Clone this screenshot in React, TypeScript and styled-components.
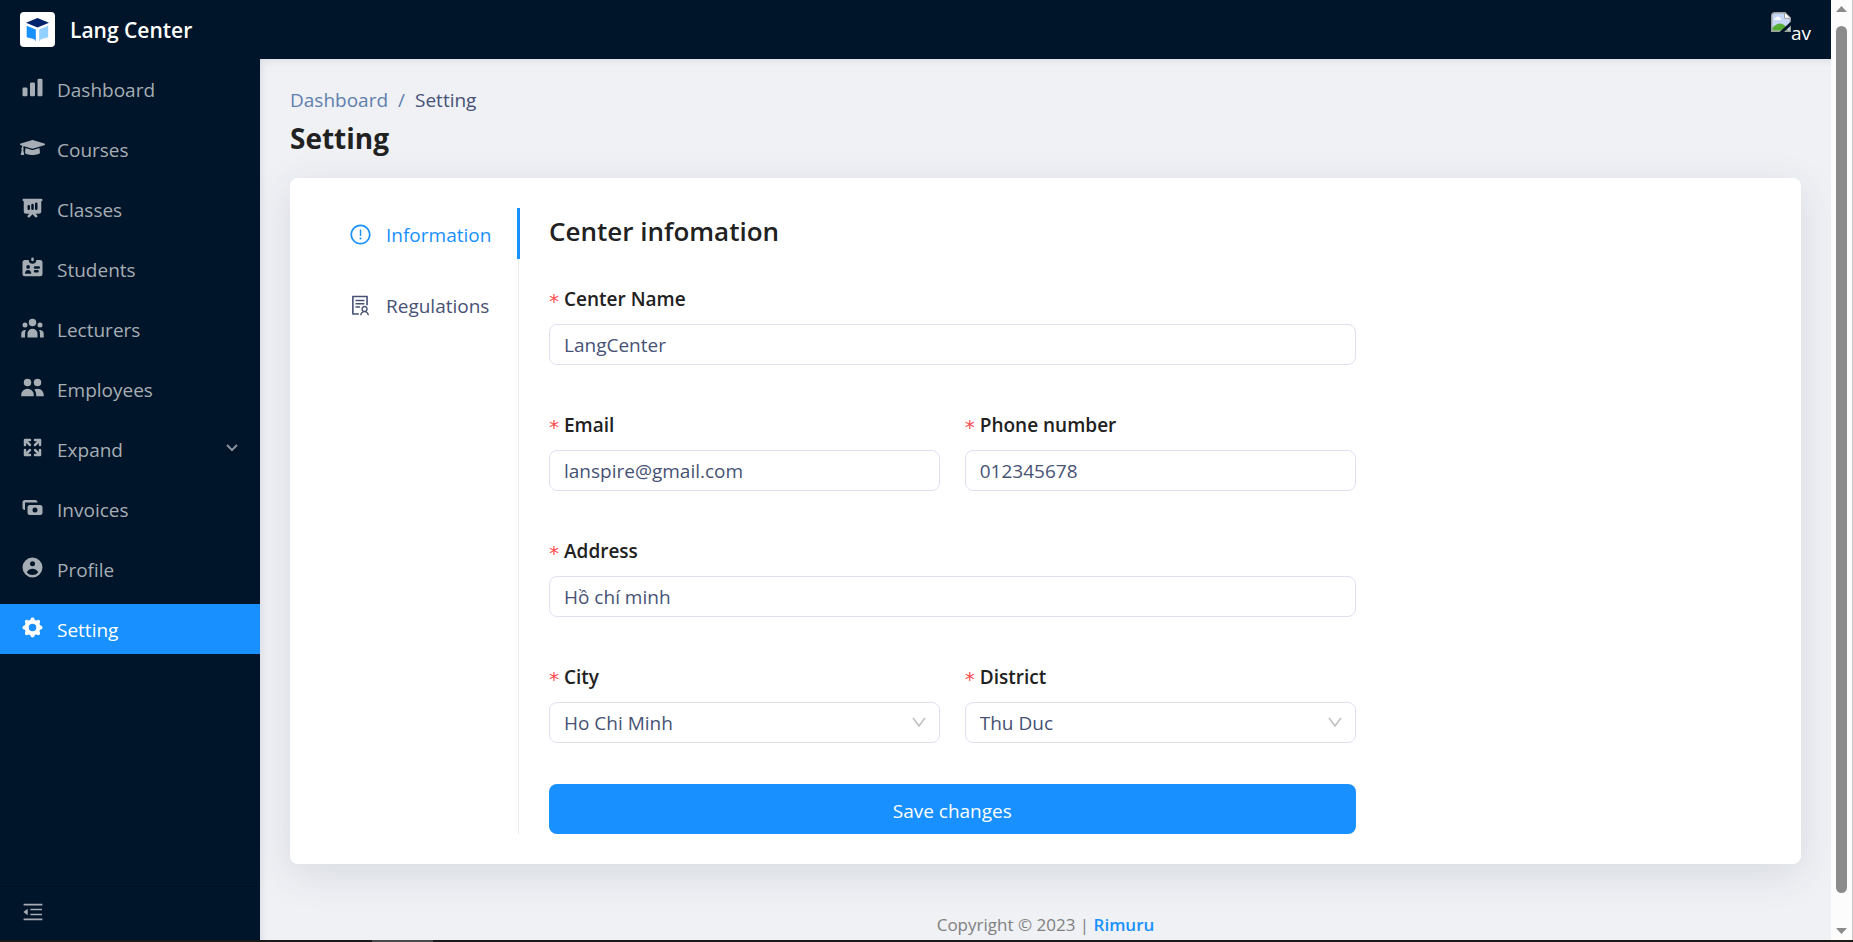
import React from 'react';
import styled, { createGlobalStyle, css } from 'styled-components';
import type { IconType } from 'react-icons';
import {
  HiArrowsExpand,
  HiCash,
  HiChartBar,
  HiCog,
  HiIdentification,
  HiPresentationChartBar,
  HiUserCircle,
  HiUserGroup,
  HiUsers,
} from 'react-icons/hi';
import { FaGraduationCap } from 'react-icons/fa';
import { AiOutlineExclamationCircle, AiOutlineMenuFold, AiOutlineSolution } from 'react-icons/ai';

const color = {
  navy: '#001529',
  blue: '#1890ff',
  page: '#eff1f5',
  heading: '#212121',
  text: '#475275',
  muted: '#5f7fae',
  menu: '#a6adb4',
  line: '#e0e0f3',
  required: '#ff4d4f',
};

const GlobalStyle = createGlobalStyle`
  *, *::before, *::after { box-sizing: border-box; }
  body {
    margin: 0;
    background: ${color.page};
    color: ${color.text};
    font-family: 'Open Sans', 'Noto Sans', sans-serif;
    font-size: 19px;
    line-height: 30px;
  }
  button, input, select { font: inherit; color: inherit; }
  h1, h2, ul, ol { margin: 0; padding: 0; }
  ul, ol { list-style: none; }
  a { text-decoration: none; }
  svg { flex-shrink: 0; }
`;

const Shell = styled.div`
  display: flex;
  flex-direction: column;
  height: 100vh;
`;

const Viewport = styled.div`
  display: flex;
  flex: 1;
  min-height: 0;
`;

const Page = styled.div`
  display: flex;
  flex-direction: column;
  flex: 1;
  min-width: 0;
`;

const Header = styled.header`
  display: flex;
  align-items: center;
  justify-content: space-between;
  flex: none;
  height: 59px;
  padding: 0 20px;
  background: ${color.navy};
  color: #fff;
`;

const Brand = styled.a`
  display: flex;
  align-items: center;
  gap: 15px;
  color: #fff;
  font-size: 21px;
  font-weight: 600;
`;

const Avatar = styled.div`
  display: flex;
  align-items: flex-end;
  height: 35px;
  padding-bottom: 2px;
  line-height: 24px;
  svg { align-self: flex-start; }
`;

const Body = styled.div`
  display: flex;
  flex: 1;
  min-height: 0;
`;

const Sidebar = styled.aside`
  display: flex;
  flex-direction: column;
  justify-content: space-between;
  flex: none;
  width: 260px;
  background: ${color.navy};
`;

const Menu = styled.ul`
  display: flex;
  flex-direction: column;
  gap: 10px;
  padding-top: 5px;
`;

const MenuLink = styled.a<{ $active?: boolean }>`
  display: flex;
  align-items: center;
  height: 50px;
  padding: 2px 20px 0;
  color: ${(p) => (p.$active ? '#fff' : color.menu)};
  background: ${(p) => (p.$active ? color.blue : 'transparent')};
  > svg:first-child {
    margin: 0 12px 5px 0;
  }
  > svg:last-child {
    margin: 0 2px 5px auto;
  }
`;

const CollapseButton = styled.button`
  display: flex;
  align-items: center;
  height: 54px;
  padding: 0 21px 4px;
  border: 0;
  border-top: 1px solid #001020;
  background: transparent;
  color: ${color.menu};
`;

const Main = styled.main`
  flex: 1;
  min-width: 0;
  overflow: hidden;
  padding: 25px 30px 0;
  box-shadow: inset 6px 6px 10px -6px rgba(0, 21, 41, 0.12);
`;

const Crumbs = styled.ol`
  display: flex;
  gap: 10px;
  line-height: 32px;
  color: ${color.muted};
  a { color: ${color.muted}; }
`;

const Current = styled.span`
  color: ${color.text};
`;

const Title = styled.h1`
  color: ${color.heading};
  font-size: 28px;
  font-weight: 700;
  line-height: 44px;
`;

const Card = styled.section`
  display: flex;
  gap: 29px;
  margin-top: 18px;
  padding: 30px;
  border-radius: 8px;
  background: #fff;
  box-shadow: 0 10px 40px rgba(50, 60, 70, 0.12);
`;

const TabList = styled.div`
  display: flex;
  flex-direction: column;
  gap: 20px;
  flex: none;
  width: 200px;
  background: linear-gradient(#ebebf0, #ebebf0) 198px 0 / 1px 100% no-repeat;
`;

const Tab = styled.button<{ $active?: boolean }>`
  display: flex;
  align-items: center;
  gap: 14px;
  height: 51px;
  padding: 2px 0 0 29px;
  border: 0;
  border-right: 3px solid ${(p) => (p.$active ? color.blue : 'transparent')};
  background: transparent;
  color: ${(p) => (p.$active ? color.blue : color.text)};
  white-space: nowrap;
`;

const Pane = styled.div`
  flex: 1;
  min-width: 0;
`;

const PaneTitle = styled.h2`
  margin-bottom: 30px;
  color: ${color.heading};
  font-size: 26px;
  font-weight: 600;
  line-height: 46px;
`;

const Form = styled.form`
  display: flex;
  flex-direction: column;
  gap: 41px;
  width: 66%;
`;

const FieldGrid = styled.div`
  display: grid;
  grid-template-columns: 1fr 1fr;
  gap: 45px 25px;
`;

const Field = styled.div<{ $wide?: boolean }>`
  display: flex;
  flex-direction: column;
  gap: 10px;
  min-width: 0;
  ${(p) => p.$wide && 'grid-column: 1 / -1;'}
`;

const Label = styled.label`
  display: flex;
  gap: 5px;
  color: ${color.heading};
  font-weight: 600;
  line-height: 30px;
  &::before {
    content: '*';
    display: flex;
    justify-content: center;
    width: 10px;
    height: 30px;
    color: ${color.required};
    font-family: 'DejaVu Sans Mono', monospace;
    font-size: 20px;
    font-weight: 400;
    line-height: 34px;
  }
`;

const control = css`
  width: 100%;
  height: 41px;
  padding: 0 14px;
  border: 1px solid ${color.line};
  border-radius: 8px;
  outline: 0;
  background: #fff;
`;

const TextInput = styled.input`
  ${control}
`;

const SelectBox = styled.div`
  display: grid;
  align-items: center;
  > * { grid-area: 1 / 1; }
  svg { justify-self: end; margin-right: 14px; pointer-events: none; }
`;

const Select = styled.select`
  ${control}
  appearance: none;
`;

const SaveButton = styled.button`
  height: 50px;
  padding-top: 4px;
  border: 0;
  border-radius: 8px;
  background: ${color.blue};
  color: #fff;
`;

const Footer = styled.footer`
  padding-top: 46px;
  color: #808080;
  font-size: 17px;
  text-align: center;
  a { color: ${color.blue}; font-weight: 600; }
`;

const ScrollTrack = styled.div`
  display: flex;
  flex-direction: column;
  align-items: center;
  flex: none;
  width: 22px;
  padding: 6px 0;
  border-right: 1px solid #c8c8c8;
  background: #fcfcfc;
`;

const ScrollThumb = styled.div`
  flex: 1;
  width: 11px;
  margin: 14px 0 35px;
  border-radius: 6px;
  background: #8b8b8b;
`;

const BottomEdge = styled.div`
  flex: none;
  height: 2px;
  background: linear-gradient(#4a4a4a, #4a4a4a) 372px 0 / 61px 2px no-repeat #1c1a19;
`;

const Logo = () => (
  <svg width="35" height="35" viewBox="0 0 35 35" aria-hidden="true">
    <rect width="35" height="35" rx="4" fill="#fff" />
    <path d="M6 10.7 17.5 6 29 10.7 17.5 15.4Z" fill="#00246b" />
    <path d="M6.7 13.8 15.8 17.4V29.3Q14.5 26.8 12 26.6Q9.5 26.3 6.7 25.3Z" fill="#1890ff" />
    <path d="M28.2 13.8 19.2 17.4V29.3Q20.3 27 23 26.6Q25.5 26.3 28.2 25.3Z" fill="#91d0ff" />
  </svg>
);

const BrokenImage = () => (
  <svg width="20" height="20" viewBox="0 0 20 20" aria-hidden="true">
    <path d="M4 .7H14L19.3 6V19.3H.7V4Q.7.7 4 .7Z" fill="#c6d8f5" stroke="#a0a0a0" strokeWidth="1.4" />
    <path d="M3 8Q3 5.5 5 5.5Q6.5 3.5 8 5.3Q10 5.3 10 8Z" fill="#fff" />
    <path d="M1.4 18.6V16Q5 11.5 9 11.5Q14 11.5 17 18.6Z" fill="#56ae35" />
    <path d="M8.5 20 20 9.5V13.5L13 20Z" fill="#001529" />
    <path d="M13.5.7V6.3H19.3" fill="#fff" stroke="#a0a0a0" />
  </svg>
);

const MenuChevron = () => (
  <svg width="12" height="12" viewBox="0 0 12 12" fill="none" aria-hidden="true">
    <path d="m1 3 5 5 5-5" stroke="#87919b" strokeWidth="2" />
  </svg>
);

const SelectChevron = () => (
  <svg width="14" height="14" viewBox="0 0 14 14" fill="none" aria-hidden="true">
    <path d="m1 2 6 8 6-8" stroke="#bfbfbf" strokeWidth="1.5" />
  </svg>
);

const ScrollArrow = ({ down }: { down?: boolean }) => (
  <svg width="11" height="6" viewBox="0 0 11 6" aria-hidden="true">
    <path d={down ? 'M0 0H11L5.5 6Z' : 'M0 6H11L5.5 0Z'} fill="#8b8b8b" />
  </svg>
);

const menuItems: { label: string; icon: IconType; active?: boolean; expandable?: boolean }[] = [
  { label: 'Dashboard', icon: HiChartBar },
  { label: 'Courses', icon: FaGraduationCap },
  { label: 'Classes', icon: HiPresentationChartBar },
  { label: 'Students', icon: HiIdentification },
  { label: 'Lecturers', icon: HiUserGroup },
  { label: 'Employees', icon: HiUsers },
  { label: 'Expand', icon: HiArrowsExpand, expandable: true },
  { label: 'Invoices', icon: HiCash },
  { label: 'Profile', icon: HiUserCircle },
  { label: 'Setting', icon: HiCog, active: true },
];

function InputField({ id, label, value, type = 'text', wide }: {
  id: string; label: string; value: string; type?: string; wide?: boolean;
}) {
  return (
    <Field $wide={wide}>
      <Label htmlFor={id}>{label}</Label>
      <TextInput id={id} type={type} defaultValue={value} required />
    </Field>
  );
}

function SelectField({ id, label, value }: { id: string; label: string; value: string }) {
  return (
    <Field>
      <Label htmlFor={id}>{label}</Label>
      <SelectBox>
        <Select id={id} defaultValue={value} required>
          <option>{value}</option>
        </Select>
        <SelectChevron />
      </SelectBox>
    </Field>
  );
}

export default function App() {
  return (
    <Shell>
      <GlobalStyle />
      <Viewport>
        <Page>
          <Header>
            <Brand href="#home">
              <Logo />
              <span>Lang Center</span>
            </Brand>
            <Avatar>
              <BrokenImage />
              <span>av</span>
            </Avatar>
          </Header>
          <Body>
            <Sidebar>
              <nav>
                <Menu>
                  {menuItems.map(({ label, icon: Icon, active, expandable }) => (
                    <li key={label}>
                      <MenuLink href={`#${label.toLowerCase()}`} $active={active}>
                        <Icon size={25} />
                        <span>{label}</span>
                        {expandable && <MenuChevron />}
                      </MenuLink>
                    </li>
                  ))}
                </Menu>
              </nav>
              <CollapseButton type="button" aria-label="Collapse menu">
                <AiOutlineMenuFold size={24} />
              </CollapseButton>
            </Sidebar>
            <Main>
              <nav aria-label="Breadcrumb">
                <Crumbs>
                  <li><a href="#dashboard">Dashboard</a></li>
                  <li aria-hidden="true">/</li>
                  <li><Current>Setting</Current></li>
                </Crumbs>
              </nav>
              <Title>Setting</Title>
              <Card>
                <TabList role="tablist" aria-orientation="vertical">
                  <Tab type="button" role="tab" aria-selected="true" $active>
                    <AiOutlineExclamationCircle size={23} />
                    Information
                  </Tab>
                  <Tab type="button" role="tab" aria-selected="false">
                    <AiOutlineSolution size={23} />
                    Regulations
                  </Tab>
                </TabList>
                <Pane role="tabpanel">
                  <PaneTitle>Center infomation</PaneTitle>
                  <Form onSubmit={(e) => e.preventDefault()}>
                    <FieldGrid>
                      <InputField id="name" label="Center Name" value="LangCenter" wide />
                      <InputField id="email" label="Email" value="lanspire@gmail.com" type="email" />
                      <InputField id="phone" label="Phone number" value="012345678" type="tel" />
                      <InputField id="address" label="Address" value="Hồ chí minh" wide />
                      <SelectField id="city" label="City" value="Ho Chi Minh" />
                      <SelectField id="district" label="District" value="Thu Duc" />
                    </FieldGrid>
                    <SaveButton type="submit">Save changes</SaveButton>
                  </Form>
                </Pane>
              </Card>
              <Footer>
                Copyright © 2023 | <a href="#rimuru">Rimuru</a>
              </Footer>
            </Main>
          </Body>
        </Page>
        <ScrollTrack aria-hidden="true">
          <ScrollArrow />
          <ScrollThumb />
          <ScrollArrow down />
        </ScrollTrack>
      </Viewport>
      <BottomEdge />
    </Shell>
  );
}
